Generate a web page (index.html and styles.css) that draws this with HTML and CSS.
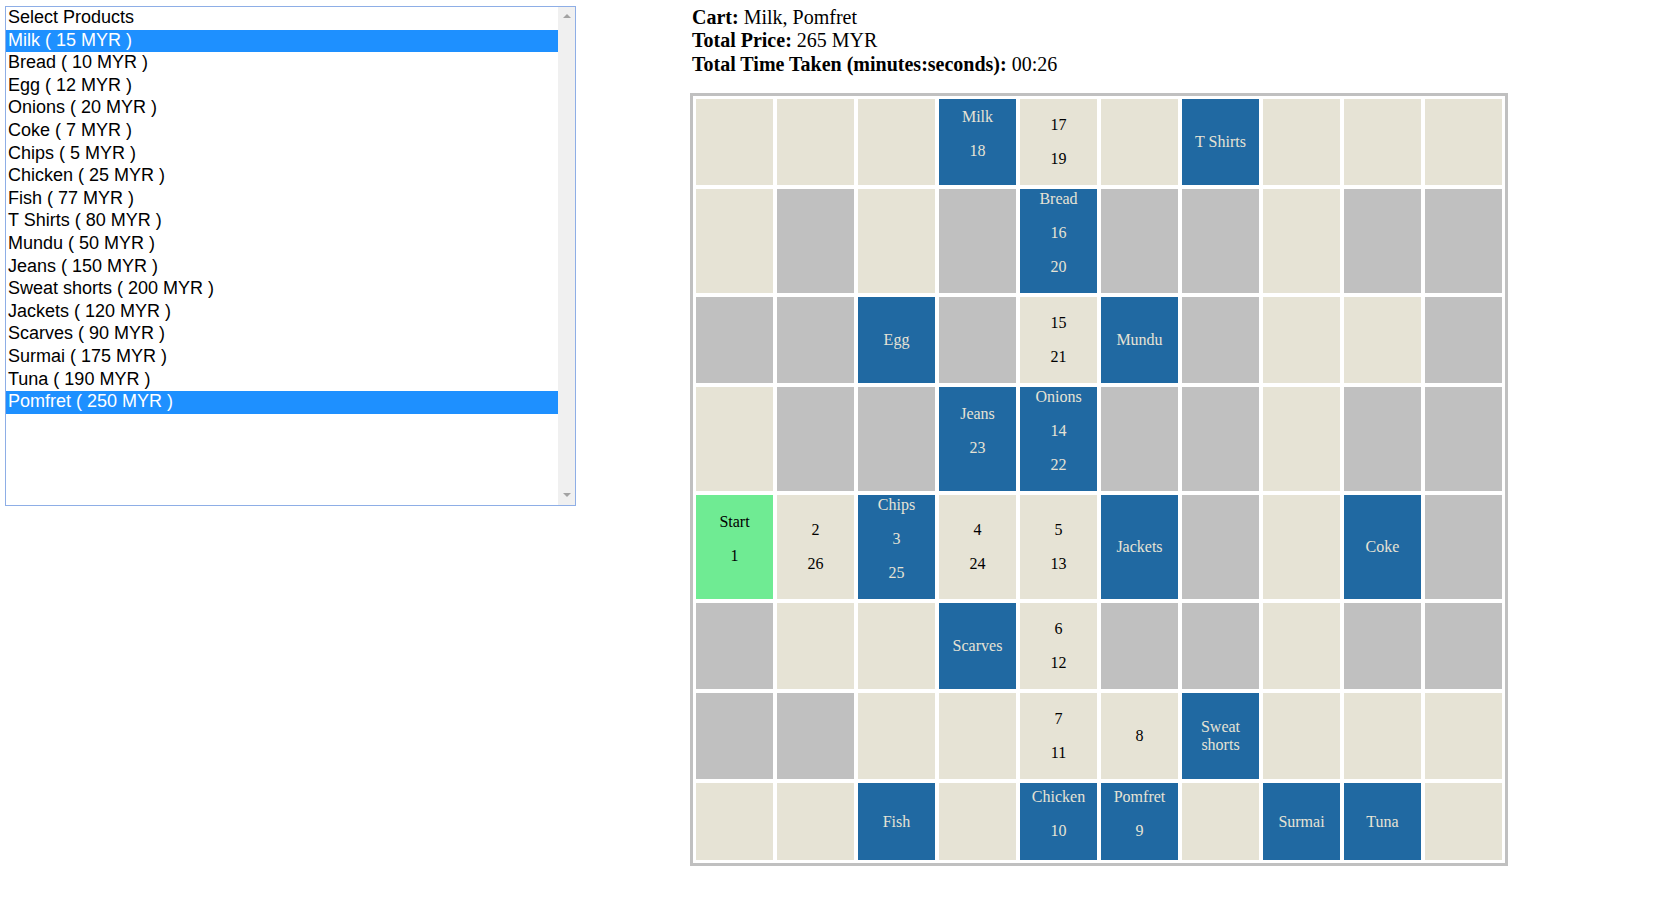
FILE: index.html
```html
<!DOCTYPE html>
<html lang="en">
<head>
<meta charset="utf-8">
<title>Shopping Path</title>
<link rel="stylesheet" href="styles.css">
</head>
<body>
<div class="page">
  <div class="listbox" role="listbox" aria-label="Select Products">
    <div class="options">
      <div class="opt">Select Products</div>
      <div class="opt sel">Milk ( 15 MYR )</div>
      <div class="opt">Bread ( 10 MYR )</div>
      <div class="opt">Egg ( 12 MYR )</div>
      <div class="opt">Onions ( 20 MYR )</div>
      <div class="opt">Coke ( 7 MYR )</div>
      <div class="opt">Chips ( 5 MYR )</div>
      <div class="opt">Chicken ( 25 MYR )</div>
      <div class="opt">Fish ( 77 MYR )</div>
      <div class="opt">T Shirts ( 80 MYR )</div>
      <div class="opt">Mundu ( 50 MYR )</div>
      <div class="opt">Jeans ( 150 MYR )</div>
      <div class="opt">Sweat shorts ( 200 MYR )</div>
      <div class="opt">Jackets ( 120 MYR )</div>
      <div class="opt">Scarves ( 90 MYR )</div>
      <div class="opt">Surmai ( 175 MYR )</div>
      <div class="opt">Tuna ( 190 MYR )</div>
      <div class="opt sel">Pomfret ( 250 MYR )</div>
    </div>
    <div class="scrollbar"><span class="arrow up"></span><span class="arrow down"></span></div>
  </div>

  <div class="main">
    <div class="summary">
      <div><b>Cart:</b> Milk, Pomfret</div>
      <div><b>Total Price:</b> 265 MYR</div>
      <div><b>Total Time Taken (minutes:seconds):</b> 00:26</div>
    </div>

    <div class="grid">
      <!-- row 1 -->
      <div class="cell free"></div>
      <div class="cell free"></div>
      <div class="cell free"></div>
      <div class="cell prod"><div class="inner">Milk<p>18</p></div></div>
      <div class="cell free"><div class="inner"><p>17</p><p>19</p></div></div>
      <div class="cell free"></div>
      <div class="cell prod"><div class="inner">T Shirts</div></div>
      <div class="cell free"></div>
      <div class="cell free"></div>
      <div class="cell free"></div>
      <!-- row 2 -->
      <div class="cell free"></div>
      <div class="cell wall"></div>
      <div class="cell free"></div>
      <div class="cell wall"></div>
      <div class="cell prod"><div class="inner">Bread<p>16</p><p>20</p></div></div>
      <div class="cell wall"></div>
      <div class="cell wall"></div>
      <div class="cell free"></div>
      <div class="cell wall"></div>
      <div class="cell wall"></div>
      <!-- row 3 -->
      <div class="cell wall"></div>
      <div class="cell wall"></div>
      <div class="cell prod"><div class="inner">Egg</div></div>
      <div class="cell wall"></div>
      <div class="cell free"><div class="inner"><p>15</p><p>21</p></div></div>
      <div class="cell prod"><div class="inner">Mundu</div></div>
      <div class="cell wall"></div>
      <div class="cell free"></div>
      <div class="cell free"></div>
      <div class="cell wall"></div>
      <!-- row 4 -->
      <div class="cell free"></div>
      <div class="cell wall"></div>
      <div class="cell wall"></div>
      <div class="cell prod"><div class="inner">Jeans<p>23</p></div></div>
      <div class="cell prod"><div class="inner">Onions<p>14</p><p>22</p></div></div>
      <div class="cell wall"></div>
      <div class="cell wall"></div>
      <div class="cell free"></div>
      <div class="cell wall"></div>
      <div class="cell wall"></div>
      <!-- row 5 -->
      <div class="cell start"><div class="inner">Start<p>1</p></div></div>
      <div class="cell free"><div class="inner"><p>2</p><p>26</p></div></div>
      <div class="cell prod"><div class="inner">Chips<p>3</p><p>25</p></div></div>
      <div class="cell free"><div class="inner"><p>4</p><p>24</p></div></div>
      <div class="cell free"><div class="inner"><p>5</p><p>13</p></div></div>
      <div class="cell prod"><div class="inner">Jackets</div></div>
      <div class="cell wall"></div>
      <div class="cell free"></div>
      <div class="cell prod"><div class="inner">Coke</div></div>
      <div class="cell wall"></div>
      <!-- row 6 -->
      <div class="cell wall"></div>
      <div class="cell free"></div>
      <div class="cell free"></div>
      <div class="cell prod"><div class="inner">Scarves</div></div>
      <div class="cell free"><div class="inner"><p>6</p><p>12</p></div></div>
      <div class="cell wall"></div>
      <div class="cell wall"></div>
      <div class="cell free"></div>
      <div class="cell wall"></div>
      <div class="cell wall"></div>
      <!-- row 7 -->
      <div class="cell wall"></div>
      <div class="cell wall"></div>
      <div class="cell free"></div>
      <div class="cell free"></div>
      <div class="cell free"><div class="inner"><p>7</p><p>11</p></div></div>
      <div class="cell free"><div class="inner"><p>8</p></div></div>
      <div class="cell prod"><div class="inner">Sweat shorts</div></div>
      <div class="cell free"></div>
      <div class="cell free"></div>
      <div class="cell free"></div>
      <!-- row 8 -->
      <div class="cell free"></div>
      <div class="cell free"></div>
      <div class="cell prod"><div class="inner">Fish</div></div>
      <div class="cell free"></div>
      <div class="cell prod"><div class="inner">Chicken<p>10</p></div></div>
      <div class="cell prod"><div class="inner">Pomfret<p>9</p></div></div>
      <div class="cell free"></div>
      <div class="cell prod"><div class="inner">Surmai</div></div>
      <div class="cell prod"><div class="inner">Tuna</div></div>
      <div class="cell free"></div>
    </div>
  </div>
</div>
</body>
</html>
```

FILE: styles.css
```css
html, body {
  margin: 0;
  padding: 0;
  background: #ffffff;
}

.page {
  display: flex;
  align-items: flex-start;
  padding: 6px 0 0 5px;
  gap: 114px;
}

/* product list box */
.listbox {
  display: flex;
  width: 571px;
  height: 500px;
  box-sizing: border-box;
  border: 1px solid #8eaee6;
  background: #ffffff;
  font-family: "Liberation Sans", Arial, sans-serif;
  font-size: 18px;
  color: #000000;
}

.options {
  flex: 1;
  display: flex;
  flex-direction: column;
}

.opt {
  height: 22.6px;
  box-sizing: border-box;
  line-height: 21.6px;
  padding: 0 2px 1px;
  white-space: nowrap;
}

.opt.sel {
  background: #1e90ff;
  color: #ffffff;
}

.scrollbar {
  width: 17px;
  background: #f0f0f0;
  display: flex;
  flex-direction: column;
  justify-content: space-between;
  align-items: center;
  padding: 7px 0 8px;
  box-sizing: border-box;
}

.arrow {
  width: 0;
  height: 0;
  border-left: 4px solid transparent;
  border-right: 4px solid transparent;
}

.arrow.up {
  border-bottom: 4px solid #a3a3a3;
}

.arrow.down {
  border-top: 4px solid #a3a3a3;
}

/* right column */
.main {
  display: flex;
  flex-direction: column;
  align-items: flex-start;
}

.summary {
  font-family: "Liberation Serif", "Times New Roman", serif;
  font-size: 20px;
  line-height: 23.4px;
  color: #000000;
  padding-left: 2px;
  margin-bottom: 17px;
}

.grid {
  display: grid;
  grid-template-columns: repeat(10, 77px);
  grid-auto-rows: minmax(77px, auto);
  gap: 4px;
  padding: 3px;
  border: 3px solid #c0c0c0;
  font-family: "Liberation Serif", "Times New Roman", serif;
  font-size: 16px;
  line-height: 18px;
}

.cell {
  display: flex;
  flex-direction: column;
  justify-content: center;
  align-items: stretch;
  text-align: center;
  padding: 1px;
}

.cell p {
  margin: 16px 0;
}

.free {
  background: #e6e3d5;
  color: #000000;
}

.wall {
  background: #c0c0c0;
}

.prod {
  background: #2069a2;
  color: #e6e3d5;
}

.start {
  background: #6feb93;
  color: #000000;
}
```
